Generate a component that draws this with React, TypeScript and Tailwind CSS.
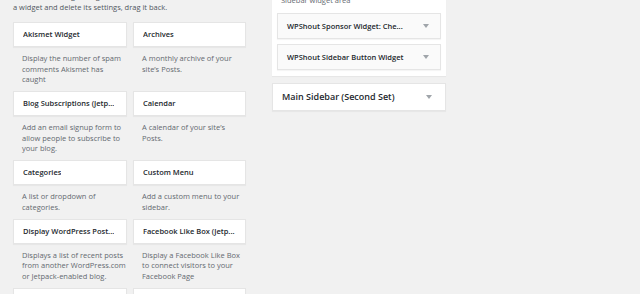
import type { ReactNode } from 'react';

// A widget that can be dragged to a sidebar: a title box with a description under it.
type AvailableWidget = {
  title: string;
  description: string;
};

const availableWidgets: AvailableWidget[] = [
  { title: 'Akismet Widget', description: 'Display the number of spam\ncomments Akismet has\ncaught' },
  { title: 'Archives', description: 'A monthly archive of your\nsite\u2019s Posts.' },
  { title: 'Blog Subscriptions (Jetp...', description: 'Add an email signup form to\nallow people to subscribe to\nyour blog.' },
  { title: 'Calendar', description: 'A calendar of your site\u2019s\nPosts.' },
  { title: 'Categories', description: 'A list or dropdown of\ncategories.' },
  { title: 'Custom Menu', description: 'Add a custom menu to your\nsidebar.' },
  { title: 'Display WordPress Post...', description: 'Displays a list of recent posts\nfrom another WordPress.com\nor Jetpack-enabled blog.' },
  { title: 'Facebook Like Box (Jetp...', description: 'Display a Facebook Like Box\nto connect visitors to your\nFacebook Page' },
  { title: 'Flickr (Jetpack)', description: 'Display your recent Flickr\nphotos.' },
  { title: 'Gallery (Jetpack)', description: 'Display a photo gallery or\nslideshow' },
];

const sidebarWidgets = ['WPShout Sponsor Widget: Che...', 'WPShout Sidebar Button Widget'];

// Small grey "open" arrow used on the right of sidebar rows.
const Arrow = () => (
  <span className="w-0 h-0 border-l-[3px] border-r-[3px] border-t-[4px] border-l-transparent border-r-transparent border-t-[#a0a5aa]" />
);

const Box = ({ children, className }: { children: ReactNode; className: string }) => (
  <div className={`border border-[#e5e5e5] shadow-[0_1px_1px_rgba(0,0,0,0.04)] ${className}`}>{children}</div>
);

const App = () => {
  return (
    <div className="w-[640px] h-[294px] overflow-hidden bg-[#f1f1f1] font-['Open_Sans','Liberation_Sans',sans-serif] text-[7.5px] leading-[10.5px]">
      <div className="flex items-start pl-[13px]">
        {/* --- AVAILABLE WIDGETS --- */}
        <div className="w-[233px] -mt-[9px]">
          <p className="text-[#50575e] whitespace-nowrap">
            To activate a widget drag it to a sidebar or click on it. To deactivate
            <br />
            a widget and delete its settings, drag it back.
          </p>
          <div className="grid grid-cols-[114px_113px] gap-x-[6px] mt-[10px]">
            {availableWidgets.map((widget) => (
              <div key={widget.title}>
                <Box className="bg-white h-[25px] flex items-center px-[9px]">
                  <span className="font-semibold text-[#23282d] whitespace-nowrap overflow-hidden">{widget.title}</span>
                </Box>
                <p className="px-[9px] pt-[6px] pb-[6.5px] text-[#646970] whitespace-pre">{widget.description}</p>
              </div>
            ))}
          </div>
        </div>

        {/* --- SIDEBARS --- */}
        <div className="w-[174px] ml-[26px]">
          <div className="bg-white -mt-[10px] pt-[4.75px] px-[5px] pb-[6px] shadow-[0_1px_1px_rgba(0,0,0,0.04)]">
            <p className="px-[4px] mb-[7.75px] text-[#646970]">Sidebar widget area</p>
            <div className="flex flex-col gap-[5px]">
              {sidebarWidgets.map((name) => (
                <Box key={name} className="bg-[#fafafa] h-[26px] flex items-center justify-between pl-[9px] pr-[11px]">
                  <span className="font-semibold text-[#23282d] whitespace-nowrap">{name}</span>
                  <Arrow />
                </Box>
              ))}
            </div>
          </div>
          <Box className="bg-white mt-[7px] h-[28px] flex items-center justify-between pl-[9px] pr-[13px]">
            <span className="text-[9px] font-semibold text-[#23282d] whitespace-nowrap">Main Sidebar (Second Set)</span>
            <Arrow />
          </Box>
        </div>
      </div>
    </div>
  );
};

export default App;
